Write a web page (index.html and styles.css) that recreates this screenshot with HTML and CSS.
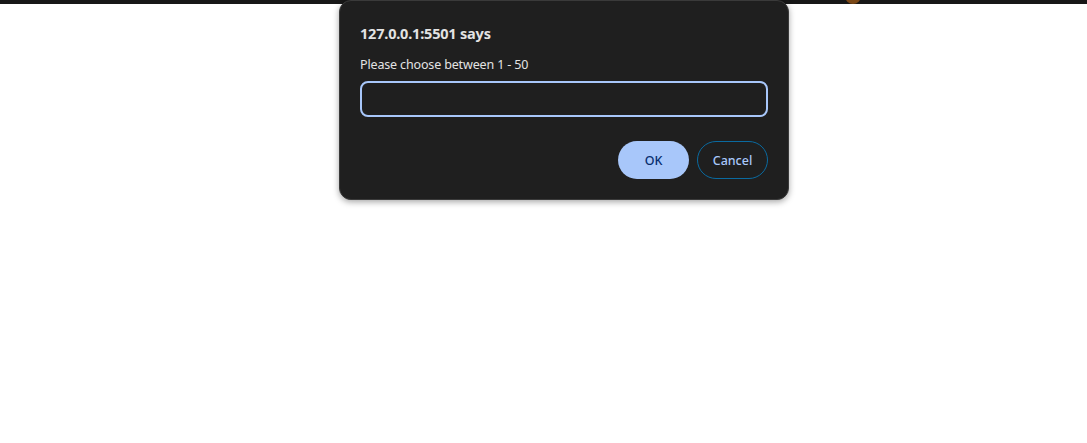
FILE: index.html
```html
<!DOCTYPE html>
<html>
<head>
<meta charset="utf-8">
<link rel="stylesheet" href="styles.css">
</head>
<body>
<div class="topbar"><span class="dot"></span></div>
<div class="page"></div>
<div class="dialog">
  <div class="title">127.0.0.1:5501 says</div>
  <div class="message">Please choose between 1 - 50</div>
  <div class="input"></div>
  <div class="actions">
    <button class="btn ok">OK</button>
    <button class="btn cancel">Cancel</button>
  </div>
</div>
</body>
</html>
```

FILE: styles.css
```css
html, body {
  margin: 0;
  padding: 0;
  background: #ffffff;
  font-family: "Noto Sans", "Open Sans", sans-serif;
}
.topbar {
  height: 4px;
  background: #171717;
  position: relative;
  overflow: hidden;
}
.dot {
  position: absolute;
  left: 845px;
  top: -12px;
  width: 16px;
  height: 16px;
  border-radius: 50%;
  background: #7a4716;
}
.dialog {
  position: absolute;
  left: 339px;
  top: 0;
  width: 408px;
  padding: 22px 20px 20px 20px;
  background: #1f1f1f;
  border: 1px solid #3a3a3a;
  border-radius: 12px;
  box-shadow: 0 2px 6px rgba(0,0,0,0.35);
  color: #e3e3e3;
}
.title {
  font-size: 14.5px;
  font-weight: 700;
  line-height: 20px;
  letter-spacing: -0.2px;
}
.message {
  margin-top: 13px;
  font-size: 12.5px;
  line-height: 18px;
  letter-spacing: -0.15px;
}
.input {
  margin-top: 7px;
  height: 32px;
  border: 2px solid #a8c7fa;
  border-radius: 8px;
  background: #1f1f1f;
}
.actions {
  margin-top: 24px;
  display: flex;
  justify-content: flex-end;
  gap: 8px;
}
.btn {
  width: 71px;
  height: 38px;
  border-radius: 19px;
  font-family: "Noto Sans", "Open Sans", sans-serif;
  font-size: 12.5px;
  font-weight: 500;
  padding: 0;
}
.ok {
  background: #a8c7fa;
  color: #062e6f;
  border: none;
}
.cancel {
  background: transparent;
  color: #a8c7fa;
  border: 1px solid #0a6aa0;
}
```
